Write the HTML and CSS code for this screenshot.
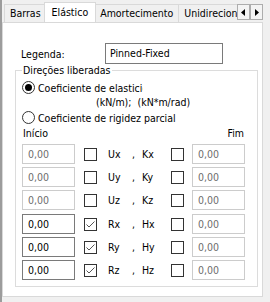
FILE: index.html
```html
<!DOCTYPE html>
<html lang="pt">
<head>
  <meta charset="UTF-8" />
  <title>Elástico</title>
  <link rel="stylesheet" href="styles.css">
</head>
<body>

<div id="window">
  <div id="tab-bar">
    <div id="tabs">
      <div class="tab">Barras</div>
      <div class="tab active">Elástico</div>
      <div class="tab">Amortecimento</div>
      <div class="tab">Unidirecional</div>
    </div>
    <div id="tab-scroll">
      <button class="arrow"><svg width="5" height="7" viewBox="0 0 5 7"><path d="M4 0 L0 3.5 L4 7 Z" fill="#000"/></svg></button>
      <button class="arrow"><svg width="5" height="7" viewBox="0 0 5 7"><path d="M1 0 L5 3.5 L1 7 Z" fill="#000"/></svg></button>
    </div>
  </div>

  <div id="panel">
    <div class="legend-row">
      <span class="legend-label">Legenda:</span>
      <div class="textbox">Pinned-Fixed</div>
    </div>

    <fieldset class="group">
      <legend>Direções liberadas</legend>

      <div class="radio-row">
        <svg class="radio" width="13" height="13" viewBox="0 0 13 13"><circle cx="6.5" cy="6.5" r="6" fill="#fff" stroke="#333"/><circle cx="6.5" cy="6.5" r="3.5" fill="#000"/></svg>
        <span class="radio-text clipped">Coeficiente de elasticidade</span>
      </div>
      <div class="units">(kN/m);&nbsp;&nbsp;(kN*m/rad)</div>
      <div class="radio-row">
        <svg class="radio" width="13" height="13" viewBox="0 0 13 13"><circle cx="6.5" cy="6.5" r="6" fill="#fff" stroke="#333"/></svg>
        <span class="radio-text">Coeficiente de rigidez parcial</span>
      </div>

      <div class="ends">
        <span>Início</span>
        <span>Fim</span>
      </div>

      <!-- translations -->
      <div class="dof-row">
        <div class="num off">0,00</div>
        <span class="check"></span>
        <span class="axis">Ux</span><span class="sep">,</span><span class="axis2">Kx</span>
        <span class="check"></span>
        <div class="num off right">0,00</div>
      </div>
      <div class="dof-row">
        <div class="num off">0,00</div>
        <span class="check"></span>
        <span class="axis">Uy</span><span class="sep">,</span><span class="axis2">Ky</span>
        <span class="check"></span>
        <div class="num off right">0,00</div>
      </div>
      <div class="dof-row">
        <div class="num off">0,00</div>
        <span class="check"></span>
        <span class="axis">Uz</span><span class="sep">,</span><span class="axis2">Kz</span>
        <span class="check"></span>
        <div class="num off right">0,00</div>
      </div>

      <!-- rotations -->
      <div class="dof-row rot-first">
        <div class="num">0,00</div>
        <span class="check checked"><svg width="11" height="11" viewBox="0 0 11 11"><path d="M1.5 5.5 L4 8 L9.5 2.5" fill="none" stroke="#555" stroke-width="1"/></svg></span>
        <span class="axis">Rx</span><span class="sep">,</span><span class="axis2">Hx</span>
        <span class="check"></span>
        <div class="num off right">0,00</div>
      </div>
      <div class="dof-row">
        <div class="num">0,00</div>
        <span class="check checked"><svg width="11" height="11" viewBox="0 0 11 11"><path d="M1.5 5.5 L4 8 L9.5 2.5" fill="none" stroke="#555" stroke-width="1"/></svg></span>
        <span class="axis">Ry</span><span class="sep">,</span><span class="axis2">Hy</span>
        <span class="check"></span>
        <div class="num off right">0,00</div>
      </div>
      <div class="dof-row">
        <div class="num">0,00</div>
        <span class="check checked"><svg width="11" height="11" viewBox="0 0 11 11"><path d="M1.5 5.5 L4 8 L9.5 2.5" fill="none" stroke="#555" stroke-width="1"/></svg></span>
        <span class="axis">Rz</span><span class="sep">,</span><span class="axis2">Hz</span>
        <span class="check"></span>
        <div class="num off right">0,00</div>
      </div>
    </fieldset>
  </div>
</div>

</body>
</html>
```

FILE: styles.css
```css
body {
  margin: 0;
  background-color: #f0f0f0;
  font-family: "DejaVu Sans Condensed", "DejaVu Sans", sans-serif;
  font-size: 10.5px;
  color: #000;
}

#window {
  height: 302px;
  border-left: 2px solid #9c9c9c;
  box-sizing: border-box;
}

#tab-bar {
  display: flex;
  height: 22px;
}

#tabs {
  display: flex;
  align-items: flex-end;
  width: 235px;
  padding-left: 2px;
  box-sizing: border-box;
  overflow: hidden;
}

.tab {
  flex-shrink: 0;
  height: 18px;
  line-height: 17px;
  padding: 0 5px;
  border: 1px solid #d9d9d9;
  border-bottom: none;
  margin-right: -1px;
  background-color: #f0f0f0;
  box-sizing: border-box;
  white-space: nowrap;
}

.tab.active {
  position: relative;
  z-index: 1;
  height: 21px;
  padding: 1px 7px 0;
  margin: 0 -2px -1px;
  background-color: #fff;
}

#tab-scroll {
  display: flex;
  margin-top: 4px;
}

.arrow {
  width: 13px;
  height: 16px;
  padding: 0;
  border: 1px solid #adadad;
  background-color: #f4f4f4;
  display: flex;
  justify-content: center;
  align-items: center;
}

#panel {
  width: 261px;
  height: 275px;
  border: 1px solid #d9d9d9;
  background-color: #fff;
  box-sizing: border-box;
}

.legend-row {
  display: flex;
  align-items: center;
  margin-top: 20px;
  padding-left: 18px;
}

.legend-label {
  width: 84px;
}

.textbox {
  width: 118px;
  height: 21px;
  line-height: 19px;
  padding-left: 4px;
  border: 1px solid #7a7a7a;
  box-sizing: border-box;
}

.group {
  width: 243px;
  margin: 0 0 0 12px;
  padding: 3px 11px 6px 6px;
  border: 1px solid #dcdcdc;
  box-sizing: border-box;
}

.group legend {
  padding: 0 1px;
  line-height: 13px;
}

.radio-row {
  display: flex;
  align-items: center;
  height: 15px;
}

.radio {
  margin-right: 3px;
}

.clipped {
  width: 105px;
  overflow: hidden;
  white-space: nowrap;
}

.units {
  height: 15px;
  line-height: 15px;
  padding-left: 74px;
}

.ends {
  display: flex;
  justify-content: space-between;
  height: 19px;
  line-height: 17px;
  padding: 0 2px 0 1px;
}

.dof-row {
  display: flex;
  align-items: center;
  height: 20px;
  margin-bottom: 3px;
}

.dof-row:last-child {
  margin-bottom: 0;
}

.rot-first {
  margin-top: 4px;
}

.num {
  width: 53px;
  height: 20px;
  line-height: 18px;
  padding-left: 5px;
  border: 1px solid #7a7a7a;
  box-sizing: border-box;
}

.num.off {
  border-color: #cccccc;
  color: #6d6d6d;
}

.num.right {
  margin-left: 8px;
}

.check {
  width: 13px;
  height: 13px;
  border: 1px solid #333;
  box-sizing: border-box;
  display: flex;
  justify-content: center;
  align-items: center;
}

.dof-row .num + .check {
  margin-left: 9px;
}

.axis {
  width: 24px;
  margin-left: 11px;
}

.sep {
  width: 10px;
}

.axis2 {
  width: 29px;
}
```
